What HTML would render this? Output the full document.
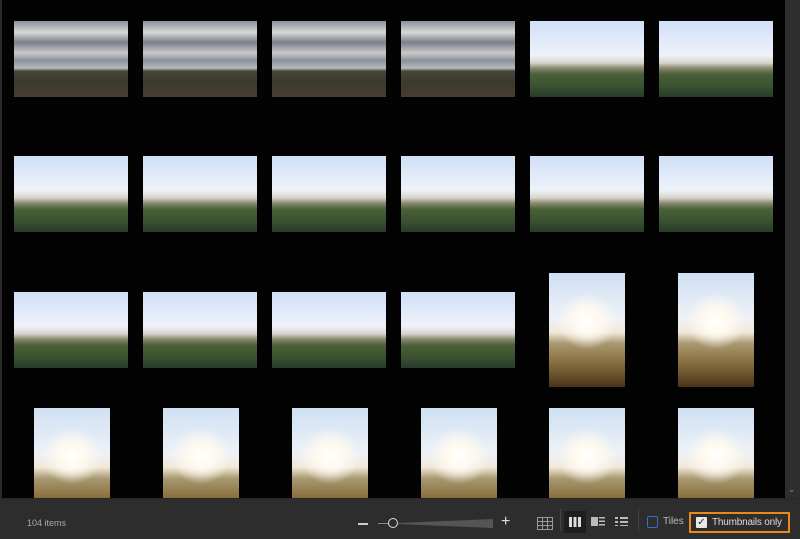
<!DOCTYPE html><html><head><style>
body{margin:0;width:800px;height:538px;background:#2b2b2b;overflow:hidden;font-family:"Liberation Sans",sans-serif;position:relative}
#main{position:absolute;left:2px;top:0;width:783px;height:498px;background:#030303;overflow:hidden}
#sb{position:absolute;left:785px;top:0;width:15px;height:498px;background:#2e2e2e}
#th{position:absolute;left:787px;top:0;width:11px;height:482px;background:#444}
.t{position:absolute}
.a{width:114px;height:76px;background:linear-gradient(#8a909a 0%,#d8d8d8 15%,#7a808a 28%,#c8c8c8 42%,#8a909a 52%,#b8bcc0 62%,#4a4638 66%,#3a3a2c 80%,#4a3c30 100%)}
.b{width:114px;height:76px;background:linear-gradient(#d0e0f6 0%,#eef2fa 45%,#d8d4cc 55%,#8a8a70 62%,#4a6038 70%,#3a5430 85%,#2a3a2c 100%)}
.c{width:76px;height:114px;background:radial-gradient(ellipse 40% 25% at 50% 42%,#fff 0,#fffaf0 40%,transparent 100%),linear-gradient(#cfe0f4 0%,#eef2f6 40%,#f0e8d8 52%,#a89870 62%,#8a7040 78%,#4a3418 100%)}
#bar{position:absolute;left:0;top:498px;width:800px;height:40px;background:#2d2d2d;border-top:1px solid #262626}
.tx{position:absolute;color:#bbb;font-size:10px}
</style></head><body>
<div id="main"></div>
<div id="sb"><div id="th"></div><div style="position:absolute;left:3px;top:484px;color:#888;font-size:9px">&#8964;</div></div>
<div id="bar">
<div class="tx" style="left:27px;top:19px;font-size:9px;color:#aaa">104 items</div>
<div style="position:absolute;left:358px;top:24px;width:10px;height:1.5px;background:#ccc"></div>
<div style="position:absolute;left:378px;top:24px;width:12px;height:1px;background:#888"></div>
<div style="position:absolute;left:397px;top:20px;width:96px;height:9px;background:#555;clip-path:polygon(0 45%,100% 0,100% 100%,0 55%)"></div>
<div style="position:absolute;left:388px;top:19px;width:8px;height:8px;border:1.5px solid #ddd;border-radius:50%;background:#2d2d2d"></div>
<div class="tx" style="left:501px;top:14px;font-size:16px;color:#ddd">+</div>
<div style="position:absolute;left:537px;top:18px;width:14px;height:11px;border:1px solid #999;background:linear-gradient(90deg,transparent 4px,#999 4px,#999 5px,transparent 5px,transparent 9px,#999 9px,#999 10px,transparent 10px),linear-gradient(transparent 3px,#999 3px,#999 4px,transparent 4px,transparent 7px,#999 7px,#999 8px,transparent 8px)"></div>
<div style="position:absolute;left:560px;top:10px;width:1px;height:22px;background:#444"></div>
<div style="position:absolute;left:564px;top:12px;width:22px;height:22px;background:#1e1e1e"></div>
<div style="position:absolute;left:569px;top:18px;width:12px;height:10px;background:repeating-linear-gradient(90deg,#ddd 0 3px,transparent 3px 4.5px)"></div>
<div style="position:absolute;left:591px;top:18px;width:7px;height:9px;background:#bbb"></div>
<div style="position:absolute;left:599px;top:18px;width:6px;height:9px;background:repeating-linear-gradient(#bbb 0 1.5px,transparent 1.5px 3.5px)"></div>
<div style="position:absolute;left:615px;top:18px;width:13px;height:9px;background:linear-gradient(90deg,transparent 3px,#2d2d2d 3px,#2d2d2d 5px,transparent 5px),repeating-linear-gradient(#bbb 0 2px,transparent 2px 4px)"></div>
<div style="position:absolute;left:638px;top:10px;width:1px;height:22px;background:#444"></div>
<div style="position:absolute;left:647px;top:17px;width:9px;height:10px;border:1.5px solid #3a6cc8;border-radius:2px"></div>
<div class="tx" style="left:663px;top:17px">Tiles</div>
<div style="position:absolute;left:689px;top:13px;width:101px;height:21px;border:2px solid #e88a1a;box-sizing:border-box"></div>
<div style="position:absolute;left:696px;top:18px;width:11px;height:11px;background:#e8e8e8;border-radius:1px;color:#222;font-size:10px;line-height:11px;text-align:center">&#10003;</div>
<div class="tx" style="left:712px;top:18px;color:#ddd;letter-spacing:-0.2px">Thumbnails only</div>
</div>
<div id="g" style="position:absolute;left:0;top:0;width:785px;height:498px;overflow:hidden">
<div class="t a" style="left:14px;top:21px"></div><div class="t a" style="left:143px;top:21px"></div><div class="t a" style="left:272px;top:21px"></div><div class="t a" style="left:401px;top:21px"></div><div class="t b" style="left:530px;top:21px"></div><div class="t b" style="left:659px;top:21px"></div>
<div class="t b" style="left:14px;top:156px"></div><div class="t b" style="left:143px;top:156px"></div><div class="t b" style="left:272px;top:156px"></div><div class="t b" style="left:401px;top:156px"></div><div class="t b" style="left:530px;top:156px"></div><div class="t b" style="left:659px;top:156px"></div>
<div class="t b" style="left:14px;top:292px"></div><div class="t b" style="left:143px;top:292px"></div><div class="t b" style="left:272px;top:292px"></div><div class="t b" style="left:401px;top:292px"></div><div class="t c" style="left:549px;top:273px"></div><div class="t c" style="left:678px;top:273px"></div>
<div class="t c" style="left:34px;top:408px"></div><div class="t c" style="left:163px;top:408px"></div><div class="t c" style="left:292px;top:408px"></div><div class="t c" style="left:421px;top:408px"></div><div class="t c" style="left:549px;top:408px"></div><div class="t c" style="left:678px;top:408px"></div>
</div>
</body></html>
